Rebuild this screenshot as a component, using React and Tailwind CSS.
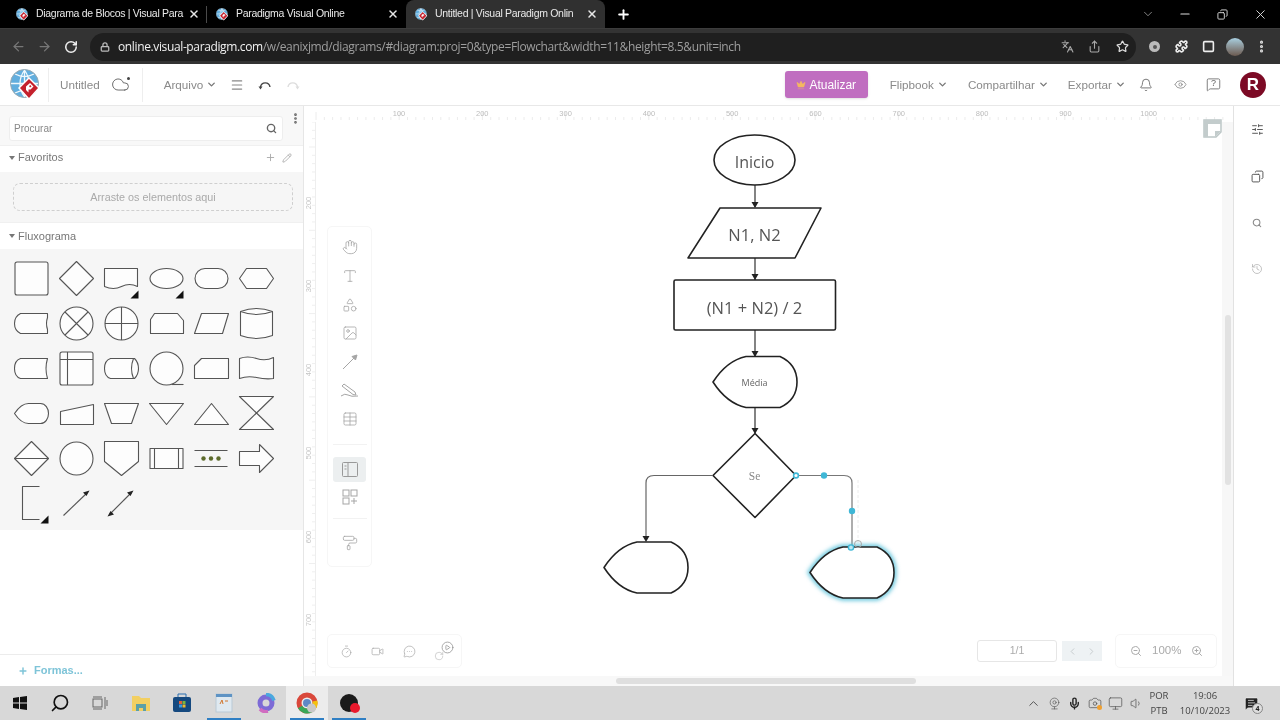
import React from "react";
import {
  ArrowLeft, ArrowRight, RotateCw, Lock, Languages, Share, Star, Puzzle, EllipsisVertical, X, Plus, Minus,
  ChevronDown, ChevronUp, Cloud, Menu, Bell, Eye, Search, Pencil, SlidersHorizontal, Copy, History,
  ZoomIn, ZoomOut, Timer, Video, ChevronLeft, ChevronRight, Hand, Type, Shapes, Image, Table, PaintRoller,
  MessageSquare, MessageSquareText, Crown, Mic, Monitor, Volume1, Webcam, Camera, MessageCircleMore, CirclePlay, Square,
} from "lucide-react";

const VPIcon = ({ size = 14 }) => (
  <svg width={size} height={size} viewBox="0 0 32 32" className="shrink-0">
    <circle cx="14.500" cy="14.500" r="14" fill="#62aede" />
    <path d="M1 14.500h27M14.500 1v27M5 5q9.500 5 19 0M5 24q9.500-5 19 0M14.500 1q-9 13.500 0 27M14.500 1q9 13.500 0 27" stroke="#f0f8fc" strokeWidth="1.300" fill="none" />
    <circle cx="14.500" cy="14.500" r="14" fill="none" stroke="#9aa9b0" strokeWidth="1" />
    <path d="M19 8l11 11-11 12-11-12z" fill="#fff" />
    <path d="M19 10l9 9-9 10-9-10z" fill="#c4202c" />
    <path d="M16 17.500l4-3.500 3.500 3.500-3 3h-2v3l-2.500-2.500z" fill="#fff" />
    <path d="M19 17l1.500-1 1 1.500-1.500 1z" fill="#c4202c" />
  </svg>
);

const Tab = ({ title, active, w, sep }) => (
  <div className={`flex items-center h-[28px] pl-[9px] pr-[7px] relative ${w} ${active ? "bg-[#303030] rounded-t-lg" : ""}`}>
    <VPIcon size={13} />
    <span className="ml-[7px] flex-1 overflow-hidden whitespace-nowrap text-[10.5px] text-[#e9e9e9] tracking-[-0.3px] font-['Liberation_Sans',sans-serif]">{title}</span>
    <X size={12} strokeWidth={3} className="text-[#e6e6e6] ml-[2px]" />
    {sep && <div className="absolute right-0 top-[6px] h-[17px] w-px bg-[#4a4a4a]" />}
  </div>
);

const ChromeBar = () => (
  <>
    <div className="h-[28px] bg-black flex items-end pl-[7px]">
      <Tab title="Diagrama de Blocos | Visual Para" w="w-[200px]" sep />
      <Tab title="Paradigma Visual Online" w="w-[199px]" />
      <Tab title="Untitled | Visual Paradigm Onlin" w="w-[199px]" active />
      <Plus size={15} strokeWidth={3} className="text-white ml-[11px] mb-[6px]" />
      <div className="flex-1" />
      <div className="flex items-center pr-[12px] h-full text-[#ddd]">
        <ChevronDown size={14} strokeWidth={1.3} className="text-[#aaa]" />
        <Minus size={14} strokeWidth={2} className="ml-[23px]" />
        <Copy size={11} strokeWidth={2} className="-scale-x-100 ml-[25px]" />
        <X size={15} strokeWidth={1.5} className="ml-[25px]" />
      </div>
    </div>
    <div className="h-[36px] bg-[#333333] flex items-center border-t border-[#3c3c3c]">
      <ArrowLeft size={15} className="text-[#777] ml-[11px]" />
      <ArrowRight size={15} className="text-[#777] ml-[11px]" />
      <RotateCw size={14} strokeWidth={2.6} className="text-[#eee] ml-[12px]" />
      <div className="ml-[12px] w-[1046px] h-[28px] rounded-full bg-[#1f1f1f] flex items-center pl-[10px] pr-[7px]">
        <Lock size={10} strokeWidth={3} className="text-[#bbb]" />
        <span className="ml-[8px] whitespace-nowrap text-[12px] tracking-[-0.37px] font-['Open_Sans',sans-serif] text-[#f1f1f1]">online.visual-paradigm.com<span className="text-[#9e9e9e]">/w/eanixjmd/diagrams/#diagram:proj=0&amp;type=Flowchart&amp;width=11&amp;height=8.5&amp;unit=inch</span></span>
        <div className="flex-1" />
        <Languages size={13} className="text-[#aaa]" />
        <Share size={13} className="text-[#aaa] ml-[14px]" />
        <Star size={13} strokeWidth={2.2} className="text-[#ddd] ml-[15px]" />
      </div>
      <div className="ml-[13px] w-[11px] h-[11px] rounded-full bg-[#bbb] border-[3px] border-[#bbb] flex items-center justify-center">
        <div className="w-[4px] h-[4px] rounded-full bg-[#555]" />
      </div>
      <Puzzle size={13} strokeWidth={3} className="text-[#eee] ml-[15px]" />
      <Square size={13} strokeWidth={3} className="text-[#eee] ml-[14px]" />
      <div className="ml-[11px] w-[18px] h-[18px] rounded-full bg-gradient-to-b from-[#a8cfe0] to-[#6b5a50]" />
      <EllipsisVertical size={15} strokeWidth={3} className="text-[#ddd] ml-[10px]" />
    </div>
  </>
);

const MenuItem = ({ children, className = "" }) => (
  <div className={`flex items-center text-[11.7px] text-[#8a8a8a] ${className}`}>
    <span>{children}</span>
    <ChevronDown size={11} strokeWidth={3} className="ml-[3px] text-[#777]" />
  </div>
);

const AppHeader = () => (
  <div className="h-[42px] bg-white border-b border-[#e8e8e8] flex items-center font-['Liberation_Sans',sans-serif] shrink-0">
    <div className="ml-[10px]"><VPIcon size={32} /></div>
    <div className="ml-[6px] h-[34px] w-px bg-[#eeeeee]" />
    <span className="ml-[11px] text-[11.7px] text-[#8a8a8a]">Untitled</span>
    <div className="ml-[11px] relative"><Cloud size={19} strokeWidth={1.2} className="text-[#666]" /><div className="absolute right-0 top-[2px] w-[3px] h-[3px] rounded-full bg-[#444]" /></div>
    <div className="ml-[12px] h-[34px] w-px bg-[#eeeeee]" />
    <MenuItem className="ml-[21px]">Arquivo</MenuItem>
    <Menu size={14} className="text-[#888] ml-[13px]" />
    <svg width="14" height="14" viewBox="0 0 14 14" fill="none" className="ml-[14px]">
      <path d="M2.500 9a4.800 4.800 0 0 1 9.500 0" stroke="#444" strokeWidth="1.400" />
      <path d="M.5 8.500l2 3 2-3z" fill="#444" />
    </svg>
    <svg width="14" height="14" viewBox="0 0 14 14" fill="none" className="ml-[14px]">
      <path d="M11.500 9a4.800 4.800 0 0 0-9.500 0" stroke="#ddd" strokeWidth="1.400" />
      <path d="M13.500 8.500l-2 3-2-3z" fill="#ddd" />
    </svg>
    <div className="flex-1" />
    <div className="w-[83px] h-[27px] rounded-[3px] bg-[#c06ec0] flex items-center justify-center text-[12px] text-white shadow-sm">
      <Crown size={10} fill="#f4b860" strokeWidth={1} className="text-[#f4b860] mr-[3px]" />
      Atualizar
    </div>
    <MenuItem className="ml-[22px]">Flipbook</MenuItem>
    <MenuItem className="ml-[20px]">Compartilhar</MenuItem>
    <MenuItem className="ml-[19px]">Exportar</MenuItem>
    <Bell size={14} strokeWidth={1.5} className="text-[#666] ml-[13px]" />
    <Eye size={13} strokeWidth={1.5} className="text-[#888] ml-[21px]" />
    <div className="relative ml-[19px] w-[15px] h-[15px]">
      <MessageSquare size={15} strokeWidth={1.5} className="text-[#777]" />
      <span className="absolute left-0 right-0 top-[1px] text-center text-[9px] leading-[10px] text-[#666]">?</span>
    </div>
    <div className="ml-[19px] mr-[14px] w-[26px] h-[26px] rounded-full bg-[#7c0a25] text-white font-bold text-[17px] flex items-center justify-center">R</div>
  </div>
);

const S = ({ children, tri }) => (
  <svg width="45" height="45" viewBox="-5.5 -5.5 45 45" fill="#fdfdfd" stroke="#555" strokeWidth="1.1" strokeLinejoin="round">
    {children}
    {tri && <path d="M26 37h8v-8z" fill="#111" stroke="none" />}
  </svg>
);

const SHAPES = [
  <S><rect width="33" height="33" x=".5" y=".5" rx="2" /></S>,
  <S><path d="M17 0l17 17-17 17-17-17z" /></S>,
  <S tri><path d="M0 7h33v18q-8-4-16 0t-17 0z" /></S>,
  <S tri><ellipse cx="17" cy="17" rx="16.500" ry="10" /></S>,
  <S><rect x=".5" y="7" width="33" height="20" rx="10" /></S>,
  <S><path d="M0 17l7-10h20l7 10-7 10h-20z" /></S>,
  <S><path d="M6 7h27v4q-2 6 0 12v4h-27q-6-3-6-10t6-10z" /></S>,
  <S><circle cx="17" cy="17" r="16.500" /><path d="M5.500 5.500l23 23M28.500 5.500l-23 23" /></S>,
  <S><circle cx="17" cy="17" r="16.500" /><path d="M17 .5v33M.5 17h33" /></S>,
  <S><path d="M5 7h23l6 7v13h-33v-14z" /></S>,
  <S><path d="M7 7h27l-6 20h-28z" /></S>,
  <S><path d="M1 5q16-6 32 0v24q-16 6-32 0z" /><path d="M1 5q16 6 32 0" /></S>,
  <S><path d="M33 7h-27q-6 2-6 10t6 10h27q-3-10 0-20z" /></S>,
  <S><rect x=".5" y=".5" width="33" height="33" rx="2" /><path d="M.5 8h33M8 .5v33" /></S>,
  <S><path d="M6 7h24q4 4 4 10t-4 10h-24q-6-2-6-10t6-10z" /><path d="M29 7q-4 10 0 20" /></S>,
  <S><circle cx="17" cy="17" r="16.500" /><path d="M22 33h12" fill="none" /></S>,
  <S><path d="M7 7h27v20h-34v-13z" /></S>,
  <S><path d="M0 7q8-3 17 0t17-1v21q-8 1-17-1t-17 1z" /></S>,
  <S><path d="M0 17C4 11 8 7 14 7H26C31 7 34 12 34 17C34 22 31 27 26 27H14C8 27 4 23 0 17Z" /></S>,
  <S><path d="M1 15l33-7v20h-33z" /></S>,
  <S><path d="M0 7h34l-7 20h-20z" /></S>,
  <S><path d="M0 7h34l-17 21z" /></S>,
  <S><path d="M17 7l17 21h-34z" /></S>,
  <S><path d="M0 0h34l-34 33h34z" /></S>,
  <S><path d="M17 0l17 17-17 17-17-17z" /><path d="M0 17h34" /></S>,
  <S><circle cx="17" cy="17" r="16.500" /></S>,
  <S><path d="M0 0h34v20l-17 14-17-14z" /></S>,
  <S><rect x=".5" y="7" width="33" height="20" /><path d="M5 7v20M29 7v20" /></S>,
  <S><path d="M0 9h33M0 25h33" /><g fill="#5d6b2c" stroke="none"><circle cx="9" cy="17" r="2.200" /><circle cx="16.500" cy="17" r="2.200" /><circle cx="24" cy="17" r="2.200" /></g></S>,
  <S><path d="M0 10h20v-7l14 14-14 14v-7h-20z" /></S>,
  <S tri><path d="M25 0h-17v33h17" fill="none" /></S>,
  <S><path d="M4 29l24-23" fill="none" /><path d="M30 4l-6.500 2 3.500 3.500z" fill="#222" stroke="none" /></S>,
  <S><path d="M5 28l22-22" fill="none" /><path d="M29 4l-6.500 2 3.500 3.500zM3 30l6.500-2-3.500-3.500z" fill="#222" stroke="none" /></S>,
];

const SectionHead = ({ children, extra, className = "" }) => (
  <div className={`flex items-center bg-white h-[27px] pl-[9px] pr-[11px] border-t border-[#f0f0f0] text-[11px] text-[#777] ${className}`}>
    <div className="w-0 h-0 border-l-[3.5px] border-r-[3.5px] border-t-[4px] border-l-transparent border-r-transparent border-t-[#777] mr-[2px]" />
    <span className="ml-[1px]">{children}</span>
    <div className="flex-1" />
    {extra}
  </div>
);

const Sidebar = () => (
  <div className="w-[304px] shrink-0 flex flex-col bg-white border-r border-[#e6e6e6] font-['Liberation_Sans',sans-serif]">
    <div className="h-[39px] bg-[#f8f8f8] flex items-start pl-[9px] pt-[10px] shrink-0">
      <div className="w-[274px] h-[25px] bg-white rounded-[3px] border border-[#eeeeee] flex items-center pl-[4px] pr-[5px] text-[10px] text-[#888]">
        <span className="flex-1">Procurar</span>
        <Search size={11} strokeWidth={3} className="text-[#666]" />
      </div>
      <EllipsisVertical size={13} strokeWidth={3} className="text-[#666] ml-[6px] -mt-[4px]" />
    </div>
    <SectionHead className="pb-[3px]" extra={<div className="flex items-center gap-[6px] text-[#aaa]"><Plus size={11} strokeWidth={2} /><Pencil size={10} /></div>}>Favoritos</SectionHead>
    <div className="h-[50px] bg-[#f6f6f6] px-[13px] pt-[11px] shrink-0">
      <div className="h-[28px] w-[280px] rounded-[7px] border border-dashed border-[#cfcfcf] flex items-center justify-center text-[10.8px] text-[#aaa]">Arraste os elementos aqui</div>
    </div>
    <SectionHead>Fluxograma</SectionHead>
    <div className="bg-[#f6f6f6] pl-[8.5px] pt-[6.5px] h-[281px] shrink-0">
      <div className="grid grid-cols-[repeat(6,45px)] auto-rows-[45px]">
        {SHAPES.map((s, i) => <div key={i}>{s}</div>)}
      </div>
    </div>
    <div className="flex-1" />
    <div className="h-[32px] border-t border-[#ececec] flex items-center pl-[18px] text-[11px] font-bold text-[#7ec4d8] bg-white">
      <Plus size={10} strokeWidth={3.5} />
      <span className="ml-[6px]">Formas...</span>
    </div>
  </div>
);

const TopRuler = () => (
  <svg width="929" height="16" viewBox="304 106 929 16" className="block shrink-0" fontFamily="Liberation Sans, sans-serif">
    {[...Array(110)].map((_, i) => <path key={i} d={`M${316 + i * 8.32} ${i % 10 === 0 ? 112 : 117}V120`} stroke="#ececec" strokeWidth="1" />)}
    {[100, 200, 300, 400, 500, 600, 700, 800, 900, 1000].map((n, i) => (
      <text key={n} x={399 + i * 83.3} y="116" textAnchor="middle" fontSize="7.5" fill="#bdbdbd">{n}</text>
    ))}
  </svg>
);

const LeftRuler = () => (
  <svg width="12" height="554" viewBox="304 122 12 554" className="block shrink-0" fontFamily="Liberation Sans, sans-serif">
    {[...Array(67)].map((_, i) => <path key={i} d={`M${i % 10 === 3 ? 309 : 312} ${122 + i * 8.33}H315`} stroke="#efefef" strokeWidth="1" />)}
    <path d="M315.500 122V676" stroke="#eeeeee" />
    {[["200", 203], ["300", 286], ["400", 370], ["500", 453], ["600", 537], ["700", 620]].map(([n, y]) => (
      <text key={n} transform={`translate(311 ${y}) rotate(-90)`} textAnchor="middle" fontSize="7.5" fill="#c4c4c4">{n}</text>
    ))}
  </svg>
);

const display = (x, y) => `M${x} ${y + 25.5} Q${x + 14} ${y + 4} ${x + 33} ${y} H${x + 67} C${x + 78} ${y + 5} ${x + 84} ${y + 14} ${x + 84} ${y + 25.5} C${x + 84} ${y + 37} ${x + 78} ${y + 46} ${x + 67} ${y + 51} H${x + 33} Q${x + 14} ${y + 47} ${x} ${y + 25.5}Z`;

const Arrowhead = ({ x, y, c = "#222" }) => <path d={`M${x - 3.5} ${y - 6}h7l-3.5 6z`} fill={c} />;

const Diagram = () => (
  <svg width="906" height="554" viewBox="316 122 906 554" className="absolute top-0 left-0" fill="none" fontFamily="Open Sans, sans-serif">
    <defs>
      <filter id="glow" x="-20%" y="-20%" width="140%" height="140%"><feGaussianBlur stdDeviation="2.2" /></filter>
    </defs>
    <g stroke="#333" strokeWidth="1.2">
      <path d="M755 185V207M755 258V280M755 330V356M755 407V433" />
    </g>
    <Arrowhead x={755} y={208} /><Arrowhead x={755} y={280} /><Arrowhead x={755} y={357} /><Arrowhead x={755} y={434} />
    <g stroke="#222" strokeWidth="1.6" fill="#fff" strokeLinejoin="round">
      <ellipse cx="754.500" cy="160" rx="40.500" ry="25" />
      <path d="M720 208H821L795 258H688Z" />
      <rect x="674" y="280" width="161.500" height="50" rx="1.500" />
      <path d={display(713, 356.5)} />
      <path d="M755 433.500L796 475.500L755 517.500L713 475.500Z" />
      <path d={display(604, 542)} />
    </g>
    <path d="M713 475.500H654Q646 475.500 646 483V536" stroke="#666" strokeWidth="1.2" />
    <Arrowhead x={646} y={542} />
    <path d="M796 475.500H844Q852 475.500 852 483V546" stroke="#777" strokeWidth="1.2" />
    <path d="M858 480V545" stroke="#ececec" strokeWidth="1" strokeDasharray="3 2" />
    <path d={display(810, 547)} stroke="#62c5dc" strokeWidth="5" filter="url(#glow)" />
    <path d={display(810, 547)} stroke="#222" strokeWidth="1.6" fill="#fff" />
    <circle cx="796" cy="475.500" r="2.400" fill="#fff" stroke="#3fb7d6" strokeWidth="1.6" />
    <circle cx="824" cy="475.500" r="3.200" fill="#3fb7d6" />
    <circle cx="852" cy="511" r="3.200" fill="#3fb7d6" />
    <circle cx="851" cy="547.500" r="2.600" fill="#bfe7f1" stroke="#3fb7d6" strokeWidth="1.4" />
    <circle cx="858" cy="544" r="3.500" stroke="#aaa" strokeWidth="1" />
    <text x="754.500" y="168" textAnchor="middle" fontSize="16" fill="#555">Inicio</text>
    <text x="754.500" y="241" textAnchor="middle" fontSize="16.5" fill="#555">N1, N2</text>
    <text x="754.500" y="314" textAnchor="middle" fontSize="16.500" fill="#555">(N1 + N2) / 2</text>
    <text x="754.500" y="386" textAnchor="middle" fontSize="9" fill="#666">Média</text>
    <text x="754.500" y="480" textAnchor="middle" fontSize="11.500" fontFamily="Liberation Serif, serif" fill="#888">Se</text>
  </svg>
);

const LeftTools = () => (
  <div className="absolute left-[11px] top-[104px] w-[45px] h-[341px] rounded-[5px] border border-[#f6f6f6] bg-white flex flex-col items-center pt-[12px] text-[#a5a5a5]">
    <Hand size={16} strokeWidth={1.2} />
    <Type size={16} strokeWidth={1.2} className="mt-[13px]" />
    <Shapes size={16} strokeWidth={1.2} className="mt-[13px]" />
    <Image size={16} strokeWidth={1.2} className="mt-[12px]" />
    <svg width="16" height="16" viewBox="0 0 16 16" className="mt-[13px]" stroke="currentColor" fill="none"><path d="M1 15L13 3" /><path d="M15 1l-5 1.500 3.500 3.500z" fill="currentColor" /></svg>
    <svg width="20" height="16" viewBox="0 0 20 16" className="mt-[12px]" stroke="currentColor" fill="none"><path d="M2 4l2-2 11 8 1 3-3-.5zM1 14q4-3 7-1t10 1" /></svg>
    <Table size={16} strokeWidth={1.2} className="mt-[13px]" />
    <div className="w-[34px] h-px bg-[#f2f2f2] mt-[17px]" />
    <div className="w-[33px] h-[25px] mt-[12px] rounded-[3px] bg-[#eceff0] flex items-center justify-center">
      <svg width="16" height="15" viewBox="0 0 16 15" stroke="#999" fill="none"><rect x=".5" y=".5" width="15" height="14" rx="1" /><path d="M6 .5v14M2.500 4h2M2.500 7h2" /></svg>
    </div>
    <svg width="16" height="16" viewBox="0 0 16 16" className="mt-[7px]" stroke="currentColor" fill="none"><rect x="1" y="1" width="6" height="6" /><rect x="9" y="1" width="6" height="6" /><rect x="1" y="9" width="6" height="6" /><path d="M9 12h6M12 9v6" /></svg>
    <div className="w-[34px] h-px bg-[#f2f2f2] mt-[13px]" />
    <PaintRoller size={16} strokeWidth={1.2} className="mt-[16px]" />
  </div>
);

const BottomTools = () => (
  <div className="absolute left-[11px] bottom-[8px] w-[135px] h-[34px] rounded-[5px] border border-[#f6f6f6] bg-white flex items-center pl-[12px] text-[#a8a8a8]">
    <Timer size={13} strokeWidth={1.3} />
    <Video size={13} strokeWidth={1.3} className="ml-[18px]" />
    <MessageCircleMore size={13} strokeWidth={1.3} className="ml-[19px]" />
    <div className="relative ml-[18px] w-[20px] h-[20px]">
      <CirclePlay size={13} strokeWidth={1.3} className="absolute right-0 top-0 text-[#888]" />
      <RotateCw size={10} strokeWidth={1.2} className="absolute left-0 bottom-0" />
    </div>
  </div>
);

const BottomRight = () => (
  <div className="absolute right-[5px] bottom-[8px] flex items-center h-[34px] font-['Liberation_Sans',sans-serif]">
    <div className="w-[80px] h-[22px] rounded-[3px] border border-[#e6e6e6] flex items-center justify-center text-[10.5px] text-[#aaa]">1/1</div>
    <div className="ml-[5px] w-[40px] h-[20px] bg-[#eef2f4] flex items-center justify-center gap-[8px] text-[#c4c9cc]">
      <ChevronLeft size={11} /><ChevronRight size={11} />
    </div>
    <div className="ml-[13px] w-[102px] h-[34px] rounded-[5px] border border-[#f6f6f6] flex items-center pl-[14px] text-[#aaa]">
      <ZoomOut size={12} />
      <span className="text-[11.5px] ml-[10px]">100%</span>
      <ZoomIn size={12} className="ml-[10px]" />
    </div>
  </div>
);

const StickyIcon = () => (
  <svg width="19" height="19" viewBox="0 0 19 19" className="absolute right-0 -top-[3px]" fill="#fff">
    <path d="M1 1h17v12l-5 5H1z" stroke="#bcc6c6" strokeWidth="1.500" />
    <path d="M1 1h17v4H1zM1 5h4v13H1z" fill="#c3cccc" />
    <path d="M18 12h-6v6z" fill="#c3cccc" />
  </svg>
);

const Canvas = () => (
  <div className="flex-1 flex flex-col min-w-0 bg-white">
    <TopRuler />
    <div className="flex-1 flex min-h-0">
      <LeftRuler />
      <div className="relative flex-1 min-w-0 bg-white">
        <Diagram />
        <LeftTools />
        <BottomTools />
        <BottomRight />
        <StickyIcon />
      </div>
      <div className="w-[11px] bg-[#f7f7f7] pt-[193px] pl-[3px] shrink-0">
        <div className="w-[6px] h-[170px] rounded-full bg-[#e2e2e2]" />
      </div>
    </div>
    <div className="h-[10px] bg-[#f8f8f8] shrink-0 pl-[312px] pt-[2px]">
      <div className="w-[300px] h-[6px] rounded-full bg-[#dfdfdf]" />
    </div>
  </div>
);

const RightPanel = () => (
  <div className="w-[47px] shrink-0 bg-white border-l border-[#e2e2e2] flex flex-col items-center pt-[17px] text-[#555]">
    <SlidersHorizontal size={13} strokeWidth={1.8} />
    <Copy size={13} strokeWidth={1.8} className="mt-[34px] -scale-x-100" />
    <Search size={10} strokeWidth={2.5} className="mt-[35px] text-[#888]" />
    <History size={12} strokeWidth={1.4} className="mt-[35px] text-[#aaa]" />
  </div>
);

const TaskIcon = ({ children, bar, active, narrow }) => (
  <div className={`relative h-[34px] flex items-center justify-center ${narrow ? "w-[40px]" : "w-[41.6px]"} ${active ? "bg-[#ececec]" : ""}`}>
    {children}
    {bar && <div className="absolute bottom-0 left-[4px] right-[4px] h-[2px] bg-[#2f7fc4]" />}
  </div>
);

const Taskbar = () => (
  <div className="h-[34px] bg-[#d8d8d8] flex items-center shrink-0 font-['Open_Sans',sans-serif]">
    <TaskIcon narrow>
      <svg width="14" height="14" viewBox="0 0 14 14" fill="#111"><path d="M0 2l6-1v5.500H0zM7 1l7-1v6.500H7zM0 7.500h6V13l-6-1zM7 7.500h7V14l-7-1z" /></svg>
    </TaskIcon>
    <TaskIcon narrow><Search size={20} strokeWidth={2} className="text-[#111] -scale-x-100" /></TaskIcon>
    <TaskIcon narrow>
      <svg width="16" height="14" viewBox="0 0 16 14" fill="none" stroke="#666"><rect x="1" y="3" width="9" height="8" /><path d="M1 1h9M1 13h9M13 1v12M15 4v6" /></svg>
    </TaskIcon>
    <TaskIcon>
      <svg width="20" height="17" viewBox="0 0 20 17"><path d="M1 1h7l2 2h9v13H1z" fill="#f2cf62" /><path d="M5 16V9h10v7h-3v-3H8v3z" fill="#5ba0a8" /></svg>
    </TaskIcon>
    <TaskIcon>
      <svg width="20" height="20" viewBox="0 0 20 20"><path d="M6 4V1h8v3" stroke="#2a6fb0" fill="none" /><rect x="1" y="4" width="18" height="15" rx="2" fill="#15497f" /><rect x="7" y="8" width="3" height="3" fill="#e2603a" /><rect x="10.500" y="8" width="3" height="3" fill="#7cb53c" /><rect x="7" y="11.500" width="3" height="3" fill="#3d9be0" /><rect x="10.500" y="11.500" width="3" height="3" fill="#f2b92d" /></svg>
    </TaskIcon>
    <TaskIcon bar>
      <svg width="18" height="20" viewBox="0 0 18 20"><rect x="1" y="1" width="16" height="18" fill="#dfe9f0" stroke="#b9c9d6" /><rect x="1" y="1" width="16" height="3" fill="#5e93c4" /><path d="M5 11l2-4 1 4M10 8h3" stroke="#d2772e" fill="none" /></svg>
    </TaskIcon>
    <TaskIcon>
      <svg width="20" height="20" viewBox="0 0 20 20"><circle cx="10" cy="10" r="6" fill="none" stroke="#7d6bd6" strokeWidth="5" /><path d="M10 1.500a8.500 8.500 0 0 1 8 6" stroke="#4aa8df" strokeWidth="3.500" fill="none" /><path d="M4 16a8.500 8.500 0 0 0 8 2.500" stroke="#d06cc0" strokeWidth="3.500" fill="none" /></svg>
    </TaskIcon>
    <TaskIcon bar active>
      <svg width="22" height="22" viewBox="0 0 22 22"><circle cx="11" cy="11" r="8" fill="none" stroke="#d9483b" strokeWidth="5" /><path d="M4.100 15a8 8 0 0 0 10.900 3" stroke="#3aa757" strokeWidth="5" fill="none" /><path d="M15 18a8 8 0 0 0 3.900-9" stroke="#f4c20d" strokeWidth="5" fill="none" /><circle cx="11" cy="11" r="4" fill="#5f88c6" /><circle cx="15.500" cy="16" r="4.500" fill="#c9c9c9" /></svg>
    </TaskIcon>
    <TaskIcon bar>
      <div className="relative w-[18px] h-[18px] rounded-full bg-[#1a1a1a]"><div className="absolute -right-[2px] -bottom-[1px] w-[10px] h-[10px] rounded-full bg-[#e8192c]" /></div>
    </TaskIcon>
    <div className="flex-1" />
    <div className="flex items-center text-[#555]">
      <ChevronUp size={15} strokeWidth={1.6} />
      <Webcam size={13} strokeWidth={1.2} className="ml-[7px]" />
      <Mic size={13} strokeWidth={2.6} className="ml-[7px] text-[#222]" />
      <div className="relative ml-[7px]"><Camera size={14} strokeWidth={1.3} /><div className="absolute right-0 bottom-0 w-[5px] h-[5px] rounded-full bg-[#f0a030]" /></div>
      <Monitor size={15} strokeWidth={1.2} className="ml-[6px]" />
      <Volume1 size={13} strokeWidth={1.4} className="ml-[7px]" />
      <div className="ml-[6px] w-[20px] text-[9.5px] leading-[15px] text-center text-[#444]">POR<br />PTB</div>
      <div className="ml-[10px] w-[52px] text-[9.5px] leading-[15px] text-center text-[#444] whitespace-nowrap">19:06<br />10/10/2023</div>
      <div className="relative ml-[13px] mr-[22px] w-[14px] h-[14px]">
        <MessageSquareText size={15} fill="#222" strokeWidth={1.2} className="text-[#eee]" />
        <div className="absolute -right-[5px] -bottom-[4px] w-[11px] h-[11px] rounded-full border border-[#888] bg-[#ddd] text-[7px] leading-[9px] text-center text-[#222] font-bold">4</div>
      </div>
    </div>
  </div>
);

export default function App() {
  return (
    <div className="w-[1280px] h-[720px] overflow-hidden flex flex-col bg-white [filter:blur(0.35px)]">
      <ChromeBar />
      <AppHeader />
      <div className="flex-1 flex min-h-0">
        <Sidebar />
        <Canvas />
        <RightPanel />
      </div>
      <Taskbar />
    </div>
  );
}
